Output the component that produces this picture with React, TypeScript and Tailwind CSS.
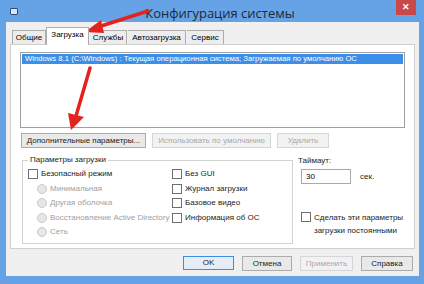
import React from "react";

const font = { fontFamily: '"Liberation Sans", Arial, sans-serif' };

const Check = ({ label, dim = false }: { label: React.ReactNode; dim?: boolean }) => (
  <div className="flex items-center gap-[3px] h-[14.5px]">
    <span className="w-[10px] h-[10px] border border-[#6f6f6f] bg-white shrink-0" />
    <span className={dim ? "text-[#9a9a9a]" : "text-[#1c1c1c]"}>{label}</span>
  </div>
);

const Radio = ({ label }: { label: React.ReactNode }) => (
  <div className="flex items-center gap-[3px] h-[14.5px] pl-[9px]">
    <span className="w-[10px] h-[10px] rounded-full border border-[#c9c9c9] bg-[#e6e6e6] shrink-0" />
    <span className="text-[#a0a0a0]">{label}</span>
  </div>
);

const Btn = ({ children, w, dim = false }: { children: React.ReactNode; w: string; dim?: boolean }) => (
  <div
    className={`${w} h-[15px] flex items-center justify-center border ${
      dim ? "border-[#d6d6d6] text-[#a8a8a8] bg-[#f2f2f2]" : "border-[#acacac] text-[#1c1c1c] bg-[#e9e9e9]"
    }`}
  >
    {children}
  </div>
);

export default function App() {
  return (
    <div
      className="w-[424px] h-[284px] bg-[#66a3e6] flex flex-col relative overflow-hidden text-[8px] leading-none whitespace-nowrap"
      style={font}
    >
      {/* title bar */}
      <div className="h-[22px] flex items-center relative shrink-0">
        <div className="ml-[10px] w-[8px] h-[7px] bg-[#d8e6f6] border border-[#2d4f7c] rounded-[1px]" />
        <div className="flex-1 text-center text-[13px] text-[#1f2a36] pr-[2px] pt-[4px]" style={{ fontFamily: '"Open Sans", sans-serif' }}>
          Конфигурация системы
        </div>
        <div className="absolute top-0 right-[8px] w-[20px] h-[15px] bg-[#c9494a] flex items-center justify-center text-white text-[9px] font-bold">
          ✕
        </div>
      </div>

      {/* body */}
      <div className="ml-[6px] mr-[5px] h-[254px] bg-[#f0f0f0] flex flex-col px-[4px]">
        {/* tabs */}
        <div className="flex items-end h-[22px] pl-[2px]">
          <div className="w-[34px] h-[14px] border border-b-0 border-[#adadad] bg-[#ededed] flex items-center justify-center">Общие</div>
          <div className="w-[43px] h-[18px] border border-b-0 border-[#adadad] bg-white flex items-center justify-center -mb-px relative z-10 pb-[3px]">
            Загрузка
          </div>
          <div className="w-[37px] h-[14px] border border-b-0 border-l-0 border-[#adadad] bg-[#ededed] flex items-center justify-center ml-[1px]">Службы</div>
          <div className="w-[58px] h-[14px] border border-b-0 border-l-0 border-[#adadad] bg-[#ededed] flex items-center justify-center ml-[1px]">Автозагрузка</div>
          <div className="w-[37px] h-[14px] border border-b-0 border-l-0 border-[#adadad] bg-[#ededed] flex items-center justify-center ml-[1px]">Сервис</div>
        </div>

        {/* tab content */}
        <div className="h-[205px] border border-[#d0d0d0] bg-white flex flex-col px-[9px] pt-[7px]">
          <div className="h-[76px] border border-[#9e9e9e] bg-white p-px">
            <div className="h-[10px] bg-[#3b8fe8] text-white flex items-center pl-[3px] text-[7.7px]">
              Windows 8.1 (C:\Windows) : Текущая операционная система; Загружаемая по умолчанию ОС
            </div>
          </div>

          <div className="flex gap-[6px] mt-[5px] ml-px">
            <Btn w="w-[125px]">Дополнительные параметры...</Btn>
            <Btn w="w-[119px]" dim>
              Использовать по умолчанию
            </Btn>
            <Btn w="w-[52px]" dim>
              Удалить
            </Btn>
          </div>

          <div className="flex mt-[8px]">
            {/* group box */}
            <fieldset className="w-[271px] h-[88px] border border-[#d3d3d3] ml-[2px] px-[5px] pt-[3px]">
              <legend className="px-[2px] text-[#1c1c1c]">Параметры загрузки</legend>
              <div className="flex">
                <div className="w-[144px] flex flex-col">
                  <Check label="Безопасный режим" />
                  <Radio label="Минимальная" />
                  <Radio label="Другая оболочка" />
                  <Radio label="Восстановление Active Directory" />
                  <Radio label="Сеть" />
                </div>
                <div className="flex flex-col">
                  <Check label="Без GUI" />
                  <Check label="Журнал загрузки" />
                  <Check label="Базовое видео" />
                  <Check label="Информация  об ОС" />
                </div>
              </div>
            </fieldset>

            {/* right side */}
            <div className="flex flex-col ml-[5px] pt-[1px]">
              <div className="text-[#1c1c1c]">Таймаут:</div>
              <div className="flex items-center mt-[4px]">
                <div className="w-[50px] h-[15px] border border-[#a9a9a9] bg-white flex items-center pl-[4px] ml-[3px]">30</div>
                <span className="ml-[9px] text-[#1c1c1c]">сек.</span>
              </div>
              <div className="flex gap-[3px] mt-[28px] ml-[3px]">
                <span className="w-[10px] h-[10px] border border-[#6f6f6f] bg-white shrink-0" />
                <span className="text-[#1c1c1c] leading-[13px] -mt-[1px]">
                  Сделать эти параметры
                  <br />
                  загрузки постоянными
                </span>
              </div>
            </div>
          </div>
        </div>

        {/* bottom buttons */}
        <div className="flex gap-[8px] justify-end mt-[7px] pr-[2px]">
          <div className="w-[51px] h-[14px] flex items-center justify-center border border-[#3d8ee0] bg-[#e5eef8] text-[#1c1c1c]">OK</div>
          <Btn w="w-[50px]">Отмена</Btn>
          <Btn w="w-[53px]" dim>
            Применить
          </Btn>
          <Btn w="w-[52px]">Справка</Btn>
        </div>
      </div>

      {/* red arrows drawn over the screenshot */}
      <svg className="absolute left-0 top-0 pointer-events-none" width="424" height="284" viewBox="0 0 424 284">
        <line x1="148" y1="11" x2="98" y2="27" stroke="#e3231c" strokeWidth="3.5" strokeLinecap="round" />
        <polygon points="85,32 101,20 104,33" fill="#e3231c" />
        <line x1="90" y1="68" x2="76" y2="116" stroke="#e3231c" strokeWidth="3.5" strokeLinecap="round" />
        <polygon points="71,130 68,113 84,117" fill="#e3231c" />
      </svg>
    </div>
  );
}
